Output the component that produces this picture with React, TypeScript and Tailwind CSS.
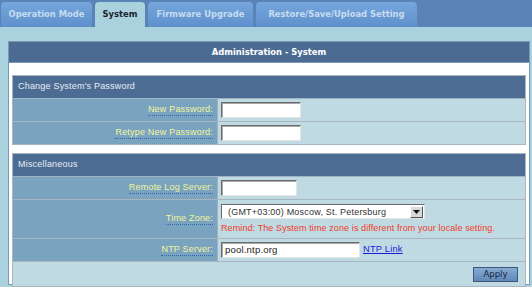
const tabs = [
  { label: "Operation Mode", w: "w-[91px]" },
  { label: "System", w: "w-[50px]", active: true },
  { label: "Firmware Upgrade", w: "w-[105px]" },
  { label: "Restore/Save/Upload Setting", w: "w-[161px]" },
];

function Label({ text, h }: { text: string; h: string }) {
  return (
    <div className={`w-[205px] ${h} bg-[#7aa3bf] flex items-center justify-end pr-[4px] border-r border-[#9fb3c2]`}>
      <span className="text-[#f2f59c] border-b border-dotted border-[#2f66b3] leading-[11px]">{text}</span>
    </div>
  );
}

function TextBox({ w, value }: { w: string; value?: string }) {
  return (
    <div className={`${w} h-[16px] bg-white border border-t-[#6b6b6b] border-l-[#6b6b6b] border-r-[#e4e4e4] border-b-[#e4e4e4] shadow-[inset_1px_1px_0_#a8a8a8] text-[#222] px-[3px] leading-[14px] text-[9.5px]`}>
      {value}
    </div>
  );
}

function SectionHead({ text }: { text: string }) {
  return (
    <div className="h-[23px] bg-[#4c6c94] text-[#e6edf5] flex items-center pl-[5px] border-b border-[#9fb3c2]">
      {text}
    </div>
  );
}

export default function App() {
  return (
    <div className="w-[532px] h-[287px] bg-[#aad2de] overflow-hidden text-[9px] tracking-[0.2px] font-['Liberation_Sans',Arial,sans-serif]">
      <div className="h-[27px] bg-[#5a83b8] flex items-end pl-[1px] gap-[3px]">
        {tabs.map((t) => (
          <div
            key={t.label}
            className={`${t.w} h-[25px] rounded-t-[4px] flex items-center justify-center whitespace-nowrap tracking-normal font-bold text-[8.4px] font-['DejaVu_Sans',Verdana,sans-serif] ${
              t.active
                ? "bg-[#aad2de] text-[#1b2430]"
                : "bg-gradient-to-b from-[#76a6dc] to-[#5f90cc] text-[#c7dcef]"
            }`}
          >
            {t.label}
          </div>
        ))}
      </div>

      <div className="pt-[14px] pl-[8px] pr-[2px]">
        <div className="border border-[#7d97b4] bg-white h-[244px]">
          <div className="h-[21px] bg-[#4b6b93] text-white font-bold tracking-normal text-[8.4px] font-['DejaVu_Sans',Verdana,sans-serif] flex items-center justify-center border-b border-[#7d97b4]">
            Administration - System
          </div>
          <div className="px-[3px] pt-[12px]">
            <div className="border border-[#a9b5bf]">
              <SectionHead text="Change System's Password" />
              <div className="flex border-b border-[#a9b5bf] bg-[#bfdae2]">
                <Label text="New Password:" h="h-[22px]" />
                <div className="flex items-center pl-[3px]">
                  <TextBox w="w-[80px]" />
                </div>
              </div>
              <div className="flex bg-[#bfdae2]">
                <Label text="Retype New Password:" h="h-[22px]" />
                <div className="flex items-center pl-[3px]">
                  <TextBox w="w-[80px]" />
                </div>
              </div>
            </div>

            <div className="border border-[#a9b5bf] mt-[8px]">
              <SectionHead text="Miscellaneous" />
              <div className="flex border-b border-[#a9b5bf] bg-[#bfdae2]">
                <Label text="Remote Log Server:" h="h-[22px]" />
                <div className="flex items-center pl-[3px]">
                  <TextBox w="w-[76px]" />
                </div>
              </div>
              <div className="flex border-b border-[#a9b5bf] bg-[#bfdae2]">
                <Label text="Time Zone:" h="h-[38px]" />
                <div className="flex flex-col justify-center pl-[3px] gap-[3px]">
                  <div className="w-[204px] h-[15px] bg-white border border-t-[#6b6b6b] border-l-[#6b6b6b] border-r-[#e4e4e4] border-b-[#e4e4e4] flex items-center text-[#333] text-[9px]">
                    <span className="flex-1 pl-[6px] leading-[12px]">(GMT+03:00) Moscow, St. Petersburg</span>
                    <span className="w-[13px] h-[12px] bg-[#d8d8d8] border border-t-white border-l-white border-r-[#555] border-b-[#555] flex items-center justify-center mr-[1px]">
                      <svg width="7" height="4" viewBox="0 0 7 4"><path d="M0 0h7L3.5 4z" fill="#111" /></svg>
                    </span>
                  </div>
                  <span className="text-[#f03c2a] leading-[12px] whitespace-nowrap tracking-[0.1px]">
                    Remind: The System time zone is different from your locale setting.
                  </span>
                </div>
              </div>
              <div className="flex border-b border-[#a9b5bf] bg-[#bfdae2]">
                <Label text="NTP Server:" h="h-[22px]" />
                <div className="flex items-center pl-[3px] gap-[3px]">
                  <TextBox w="w-[139px]" value="pool.ntp.org" />
                  <a className="text-[#1b1bd6] underline text-[9.3px]">NTP Link</a>
                </div>
              </div>
              <div className="h-[24px] bg-[#bfdae2] flex items-center justify-end pr-[7px]">
                <button className="w-[45px] h-[15px] bg-gradient-to-b from-[#86aad2] to-[#5f88b8] border border-[#3b5878] text-[#15233a] text-[8.5px] tracking-normal font-['DejaVu_Sans',Verdana,sans-serif] leading-[12px]">
                  Apply
                </button>
              </div>
            </div>
          </div>
        </div>
      </div>
    </div>
  );
}
